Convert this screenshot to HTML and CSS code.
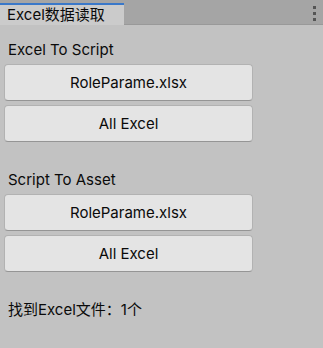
FILE: index.html
```html
<!DOCTYPE html>
<html lang="zh">
<head>
    <meta charset="UTF-8">
    <title>Excel数据读取</title>
    <link rel="stylesheet" href="styles.css">
</head>
<body>
    <div class="tabbar">
        <div class="tab">Excel数据读取</div>
        <div class="menu"><span></span><span></span><span></span></div>
    </div>
    <div class="content">
        <div class="section">
            <div class="label">Excel To Script</div>
            <button class="btn">RoleParame.xlsx</button>
            <button class="btn">All Excel</button>
        </div>
        <div class="section">
            <div class="label">Script To Asset</div>
            <button class="btn">RoleParame.xlsx</button>
            <button class="btn">All Excel</button>
        </div>
        <div class="status">找到Excel文件：1个</div>
    </div>
</body>
</html>
```

FILE: styles.css
```css
* {
    margin: 0;
    padding: 0;
    box-sizing: border-box;
    font-family: Inter, "Noto Sans CJK SC", sans-serif;
}

body {
    width: 323px;
    height: 348px;
    background-color: #c2c2c2;
    color: #0a0a0a;
    font-size: 15px;
}

.tabbar {
    height: 25px;
    background-color: #a5a5a5;
    border-bottom: 1px solid #999;
    display: flex;
    justify-content: space-between;
}

.tab {
    width: 124px;
    margin-top: 3px;
    height: 22px;
    background-color: #cbcbcb;
    border-top: 2px solid #3a78c9;
    padding-left: 7px;
    font-size: 15px;
    line-height: 19px;
}

.menu {
    display: flex;
    flex-direction: column;
    gap: 3px;
    padding: 6px 7px 0 0;
}

.menu span {
    width: 3px;
    height: 3px;
    background-color: #555;
}

.content {
    padding: 15px 0 0 4px;
    display: flex;
    flex-direction: column;
    gap: 28px;
}

.section {
    display: flex;
    flex-direction: column;
    gap: 4px;
}

.label {
    padding-left: 4px;
    line-height: 20px;
}

.btn {
    width: 249px;
    height: 37px;
    background-color: #e4e4e4;
    border: 1px solid #b2b2b2;
    border-bottom-color: #959595;
    border-radius: 4px;
    font-size: 15px;
    color: #0a0a0a;
}

.status {
    padding-left: 4px;
    line-height: 20px;
}
```
